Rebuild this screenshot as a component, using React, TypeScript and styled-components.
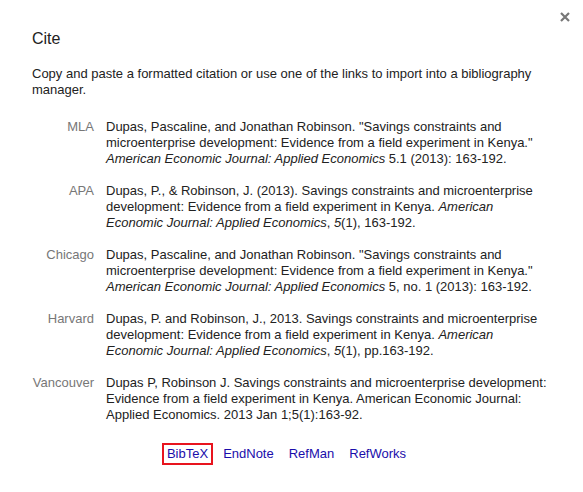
import React from "react";
import styled, { createGlobalStyle } from "styled-components";

const Global = createGlobalStyle`
  html, body { margin: 0; padding: 0; background: #fff; }
  body { font-family: "Liberation Sans", Arial, sans-serif; color: #222; }
`;

const Dialog = styled.div`
  position: relative;
  width: 583px;
  height: 492px;
  box-sizing: border-box;
  padding: 29px 32px 0 32px;
  background: #fff;
`;

const Close = styled.button`
  position: absolute;
  top: 11px;
  right: 12px;
  width: 12px;
  height: 12px;
  padding: 0;
  border: 0;
  background: transparent;
  display: flex;
  align-items: center;
  justify-content: center;
  cursor: pointer;
`;

const Title = styled.h2`
  margin: 0;
  font-size: 16px;
  line-height: 20px;
  font-weight: normal;
  color: #222;
`;

const Intro = styled.p`
  margin: 17px 0 0 0;
  font-size: 13px;
  line-height: 16px;
  color: #222;
`;

const CiteTable = styled.div`
  margin-top: 21px;
  display: grid;
  grid-template-columns: 62px 1fr;
  column-gap: 12px;
  row-gap: 16px;
  font-size: 13px;
  line-height: 16px;
`;

const Style = styled.div`
  text-align: right;
  color: #777;
  white-space: nowrap;
`;

const Citation = styled.div`
  color: #222;
  i { font-style: italic; }
`;

const Links = styled.div`
  margin-top: 20px;
  display: flex;
  justify-content: center;
  gap: 5px;
  padding-right: 10px;
  font-size: 13px;
  line-height: 16px;
`;

const Link = styled.a<{ $active?: boolean }>`
  color: #1a0dab;
  text-decoration: none;
  padding: 1px 3px;
  border: 2px solid ${(p) => (p.$active ? "#e8141e" : "transparent")};
`;

const cites: { label: string; body: React.ReactNode }[] = [
  {
    label: "MLA",
    body: (
      <>
        Dupas, Pascaline, and Jonathan Robinson. "Savings constraints and microenterprise development: Evidence from a field experiment in Kenya." <i>American Economic Journal: Applied Economics</i> 5.1 (2013): 163-192.
      </>
    ),
  },
  {
    label: "APA",
    body: (
      <>
        Dupas, P., &amp; Robinson, J. (2013). Savings constraints and microenterprise development: Evidence from a field experiment in Kenya. <i>American Economic Journal: Applied Economics</i>, <i>5</i>(1), 163-192.
      </>
    ),
  },
  {
    label: "Chicago",
    body: (
      <>
        Dupas, Pascaline, and Jonathan Robinson. "Savings constraints and microenterprise development: Evidence from a field experiment in Kenya." <i>American Economic Journal: Applied Economics</i> 5, no. 1 (2013): 163-192.
      </>
    ),
  },
  {
    label: "Harvard",
    body: (
      <>
        Dupas, P. and Robinson, J., 2013. Savings constraints and microenterprise development: Evidence from a field experiment in Kenya. <i>American Economic Journal: Applied Economics</i>, <i>5</i>(1), pp.163-192.
      </>
    ),
  },
  {
    label: "Vancouver",
    body: (
      <>
        Dupas P, Robinson J. Savings constraints and microenterprise development: Evidence from a field experiment in Kenya. American Economic Journal: Applied Economics. 2013 Jan 1;5(1):163-92.
      </>
    ),
  },
];

export default function App() {
  return (
    <>
      <Global />
      <Dialog>
        <Close aria-label="Close">
          <svg width="10" height="10" viewBox="0 0 10 10">
            <path d="M1 1 L9 9 M9 1 L1 9" stroke="#777" strokeWidth="2.2" />
          </svg>
        </Close>
        <Title>Cite</Title>
        <Intro>
          Copy and paste a formatted citation or use one of the links to import into a bibliography manager.
        </Intro>
        <CiteTable>
          {cites.map((c) => (
            <React.Fragment key={c.label}>
              <Style>{c.label}</Style>
              <Citation>{c.body}</Citation>
            </React.Fragment>
          ))}
        </CiteTable>
        <Links>
          <Link href="#" $active>BibTeX</Link>
          <Link href="#">EndNote</Link>
          <Link href="#">RefMan</Link>
          <Link href="#">RefWorks</Link>
        </Links>
      </Dialog>
    </>
  );
}
